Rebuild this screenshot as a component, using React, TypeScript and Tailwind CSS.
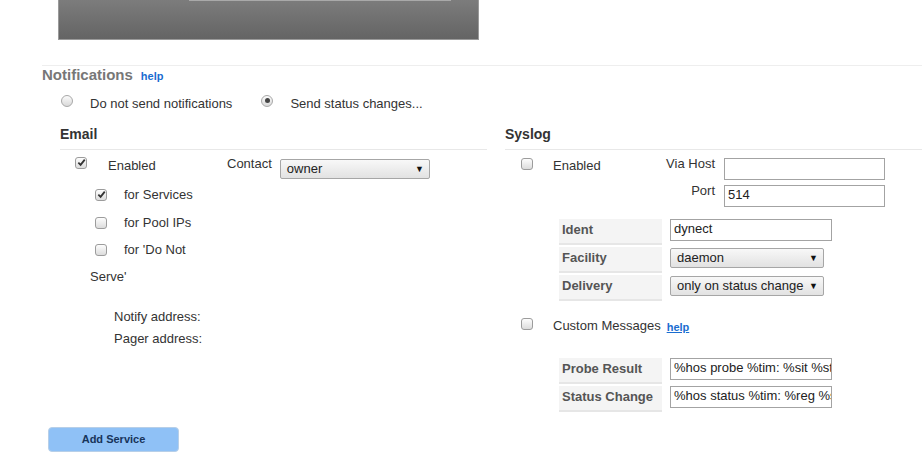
import React from "react";

function Check({ checked = false }: { checked?: boolean }) {
  return (
    <span className="flex h-[12px] w-[12px] shrink-0 items-center justify-center rounded-[3px] border border-[#9c9c9c] bg-gradient-to-b from-[#fdfdfd] to-[#dcdcdc]">
      {checked && (
        <svg viewBox="0 0 10 10" className="h-[9px] w-[9px]">
          <path d="M1.5 5.2 L4 7.6 L8.6 1.8" fill="none" stroke="#333" strokeWidth="2" />
        </svg>
      )}
    </span>
  );
}

function Radio({ checked = false }: { checked?: boolean }) {
  return (
    <span className="flex h-[12px] w-[12px] shrink-0 items-center justify-center rounded-full border border-[#a8a8a8] bg-gradient-to-b from-[#fbfbfb] to-[#d9d9d9]">
      {checked && <span className="h-[5px] w-[5px] rounded-full bg-[#444]" />}
    </span>
  );
}

function Select({ value, width }: { value: string; width: string }) {
  return (
    <div
      className={`flex h-[20px] ${width} items-center justify-between rounded-[2px] border border-[#a6a6a6] bg-gradient-to-b from-[#f8f8f8] to-[#e2e2e2] pl-[6px] pr-[5px] leading-[18px] text-[#222]`}
    >
      <span>{value}</span>
      <span className="text-[9px] text-[#111]">▼</span>
    </div>
  );
}

function TextBox({ value, width = "w-[162px]" }: { value: string; width?: string }) {
  return (
    <div
      className={`h-[22px] ${width} overflow-hidden whitespace-nowrap border border-[#a3a3a3] bg-white px-[3px] leading-[18px] text-[#222]`}
    >
      {value}
    </div>
  );
}

function Row({ label, children }: { label: string; children: React.ReactNode }) {
  return (
    <div className="mb-[2px] flex items-start">
      <div className="h-[26px] w-[103px] border-b-2 border-[#e6e6e6] bg-[#f4f4f4] pl-[3px] font-bold leading-[22px] text-[#555]">
        {label}
      </div>
      <div className="ml-[8px]">{children}</div>
    </div>
  );
}

export default function App() {
  return (
    <div className="h-[472px] w-[922px] overflow-hidden bg-white font-['Liberation_Sans',Arial,sans-serif] text-[13px] text-[#333]">
      <div className="ml-[58px] h-[40px] w-[421px] border border-t-0 border-[#9a9a9a] bg-gradient-to-b from-[#7c7c7c] to-[#646464]">
        <div className="ml-[130px] h-px w-[262px] bg-[#a9a9a9]" />
      </div>

      <div className="ml-[42px] mt-[25px] border-t border-[#eeeeee]">
        <div className="flex items-baseline">
          <span className="text-[15px] font-bold leading-[18px] text-[#777]">Notifications</span>
          <a className="ml-[8px] text-[11px] font-bold text-[#1a6dd0]">help</a>
        </div>

        <div className="mt-[10px] flex items-start">
          <span className="ml-[19px]">
            <Radio />
          </span>
          <span className="ml-[17px] mt-px leading-[16px]">Do not send notifications</span>
          <span className="ml-[29px]">
            <Radio checked />
          </span>
          <span className="ml-[17px] mt-px leading-[16px]">Send status changes...</span>
        </div>
      </div>

      <div className="mt-[14px] flex items-start">
        {/* Email */}
        <div className="ml-[60px] w-[427px]">
          <div className="h-[24px] border-b border-[#e8e8e8] text-[14px] font-bold leading-[17px] text-[#333]">
            Email
          </div>
          <div className="mt-[7px] flex items-start">
            <span className="ml-[15px]">
              <Check checked />
            </span>
            <span className="ml-[21px] mt-px w-[119px] leading-[16px]">Enabled</span>
            <span className="-mt-px leading-[16px]">Contact</span>
            <div className="ml-[8px] mt-[2px]">
              <Select value="owner" width="w-[150px]" />
            </div>
          </div>

          <div className="mt-[10px]">
            <div className="flex h-[28px] items-start">
              <span className="ml-[35px]">
                <Check checked />
              </span>
              <span className="-mt-[2px] ml-[17px] leading-[16px]">for Services</span>
            </div>
            <div className="flex h-[27px] items-start">
              <span className="ml-[35px]">
                <Check />
              </span>
              <span className="-mt-[2px] ml-[17px] leading-[16px]">for Pool IPs</span>
            </div>
            <div className="flex h-[25px] items-start">
              <span className="ml-[35px]">
                <Check />
              </span>
              <span className="-mt-[2px] ml-[17px] leading-[16px]">for 'Do Not</span>
            </div>
            <div className="ml-[30px] leading-[16px]">Serve'</div>
          </div>

          <div className="ml-[54px] mt-[21px] leading-[22px]">
            <div>Notify address:</div>
            <div>Pager address:</div>
          </div>
        </div>

        {/* Syslog */}
        <div className="ml-[18px] flex-1">
          <div className="h-[24px] border-b border-[#e8e8e8] text-[14px] font-bold leading-[17px] text-[#333]">
            Syslog
          </div>
          <div className="mt-[8px] flex items-start">
            <span className="ml-[16px]">
              <Check />
            </span>
            <span className="ml-[20px] mt-0 w-[97px] leading-[16px]">Enabled</span>
            <div>
              <div className="flex items-start">
                <span className="-mt-[2px] w-[65px] text-right leading-[16px]">Via Host</span>
                <div className="ml-[9px]">
                  <TextBox value="" width="w-[161px]" />
                </div>
              </div>
              <div className="mt-[5px] flex items-start">
                <span className="-mt-[2px] w-[65px] text-right leading-[16px]">Port</span>
                <div className="ml-[9px]">
                  <TextBox value="514" width="w-[161px]" />
                </div>
              </div>
            </div>
          </div>

          <div className="ml-[54px] mt-[12px]">
            <Row label="Ident">
              <TextBox value="dynect" />
            </Row>
            <Row label="Facility">
              <div className="mt-px">
                <Select value="daemon" width="w-[154px]" />
              </div>
            </Row>
            <Row label="Delivery">
              <div className="mt-px">
                <Select value="only on status change" width="w-[154px]" />
              </div>
            </Row>
          </div>

          <div className="mt-[17px] flex items-start">
            <span className="ml-[16px]">
              <Check />
            </span>
            <span className="ml-[20px] leading-[16px]">Custom Messages</span>
            <a className="ml-[6px] mt-[2px] text-[11px] font-bold leading-[14px] text-[#1a6dd0] underline">
              help
            </a>
          </div>

          <div className="ml-[54px] mt-[24px]">
            <Row label="Probe Result">
              <TextBox value="%hos probe %tim: %sit %sta %res" />
            </Row>
            <Row label="Status Change">
              <TextBox value="%hos status %tim: %reg %sta" />
            </Row>
          </div>
        </div>
      </div>

      <button className="ml-[48px] mt-[13px] h-[25px] w-[131px] rounded-[4px] border border-[#b7cfe8] bg-[#8fc1f6] text-[11px] font-bold text-[#17345a]">
        Add Service
      </button>
    </div>
  );
}
